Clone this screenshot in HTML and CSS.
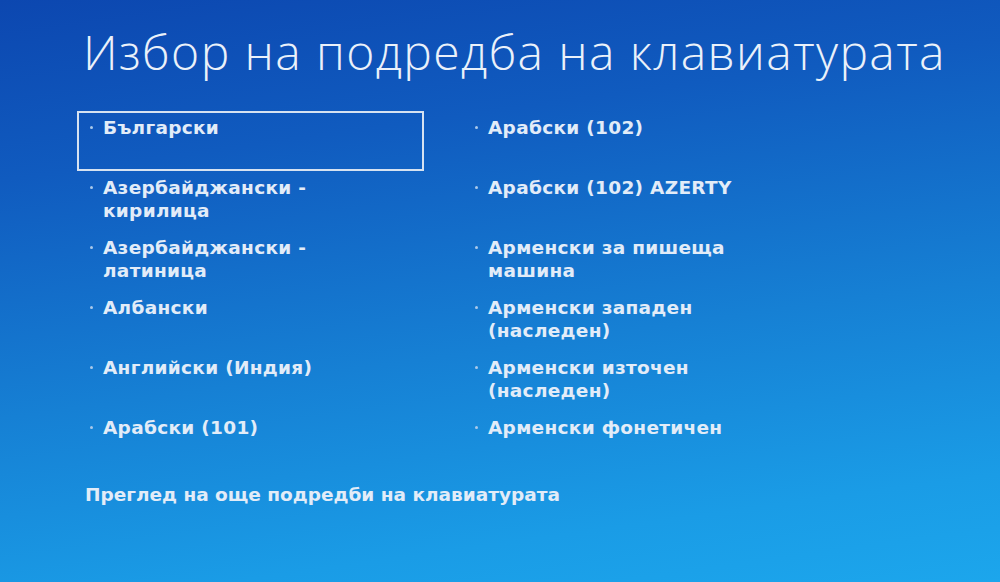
FILE: index.html
```html
<!DOCTYPE html>
<html lang="bg">
<head>
<meta charset="utf-8">
<title>Избор на подредба на клавиатурата</title>
<link rel="stylesheet" href="styles.css">
</head>
<body>
<main class="screen">
  <h1 class="title">Избор на подредба на клавиатурата</h1>
  <ul class="layouts">
    <li class="cell selected"><span class="bullet"></span><span class="label">Български</span></li>
    <li class="cell"><span class="bullet"></span><span class="label">Арабски (102)</span></li>
    <li class="cell"><span class="bullet"></span><span class="label">Азербайджански -<br>кирилица</span></li>
    <li class="cell"><span class="bullet"></span><span class="label">Арабски (102) AZERTY</span></li>
    <li class="cell"><span class="bullet"></span><span class="label">Азербайджански -<br>латиница</span></li>
    <li class="cell"><span class="bullet"></span><span class="label">Арменски за пишеща<br>машина</span></li>
    <li class="cell"><span class="bullet"></span><span class="label">Албански</span></li>
    <li class="cell"><span class="bullet"></span><span class="label">Арменски западен<br>(наследен)</span></li>
    <li class="cell"><span class="bullet"></span><span class="label">Английски (Индия)</span></li>
    <li class="cell"><span class="bullet"></span><span class="label">Арменски източен<br>(наследен)</span></li>
    <li class="cell"><span class="bullet"></span><span class="label">Арабски (101)</span></li>
    <li class="cell"><span class="bullet"></span><span class="label">Арменски фонетичен</span></li>
  </ul>
  <a class="more" href="#">Преглед на още подредби на клавиатурата</a>
</main>
</body>
</html>
```
FILE: styles.css
```css
html, body {
  margin: 0;
  padding: 0;
  height: 100%;
}
body {
  background: linear-gradient(172deg, #0c47b0 0%, #105bbf 25%, #1680d4 58%, #1a9ce6 85%, #1ca6ec 100%);
  color: #e2ecf8;
  font-family: "Open Sans", "Noto Sans", sans-serif;
  overflow: hidden;
}
.screen {
  display: flex;
  flex-direction: column;
  padding: 22px 0 0 77px;
}
.title {
  margin: 0 0 0 6px;
  font-weight: 300;
  font-size: 48px;
  line-height: 60px;
  letter-spacing: 1.4px;
  color: #eaf1fa;
}
.layouts {
  list-style: none;
  margin: 29px 0 0 0;
  padding: 0;
  display: grid;
  grid-template-columns: 347px 347px;
  grid-auto-rows: 60px;
  column-gap: 38px;
}
.cell {
  display: flex;
  align-items: flex-start;
  box-sizing: border-box;
  padding: 3px 0 0 11px;
  border: 2px solid transparent;
}
.cell.selected {
  border-color: #d6e2f1;
}
.bullet {
  flex: none;
  width: 3px;
  height: 3px;
  margin-top: 10px;
  margin-right: 10px;
  border-radius: 50%;
  background: #a9c8ea;
}
.label {
  font-family: "DejaVu Sans", "Open Sans", sans-serif;
  font-weight: 700;
  font-size: 18.5px;
  line-height: 23px;
  letter-spacing: 0.3px;
}
.more {
  margin: 12px 0 0 8px;
  color: #e2ecf8;
  text-decoration: none;
  font-family: "DejaVu Sans", "Open Sans", sans-serif;
  font-weight: 700;
  font-size: 18.5px;
  line-height: 23px;
}
```
